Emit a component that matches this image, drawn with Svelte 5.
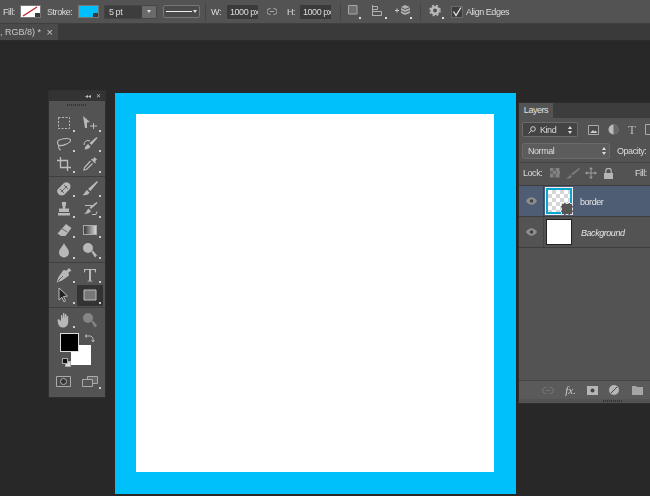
<script>
  // each icon: s = stroked path, f = filled path
  const icons = {
    marquee: { s: 'M2.500 2.500h11v11h-11z', dash: true },
    move: { f: 'M1 1l7 6-3 .5V13H3z', s: 'M8 11h7M11.500 8v6' },
    lasso: { s: 'M1.500 6c0-3 12-5 13-2s-10 7-12 5c-1-1-1-3-1-3M3 9c-1 2 0 5 2 5', width: 1.100 },
    brushSel: { f: 'M14.500 1l1 1-6 7-2-2zM6 8l2.500 2.500c-1 2-3 3-6 3 1-1 0-2 1-3z', s: 'M2 9a4 4 0 0 1 6-4' },
    crop: { s: 'M4.500 1v10.500H15M1 4.500h10.500V15', width: 1.300 },
    picker: { f: 'M12.500 1l2.500 2.500-2 2 1 1-1 1-4-4 1-1 1 1z', s: 'M8.500 5L2.500 11.500 2 14l2.500-.5L10.500 7.500', width: 1.200 },
    heal: { f: 'M2 8l6-6c2-1.500 5-.5 6 1.500s.5 4-1 5.500l-5 5c-2 1-5 .5-6-1.500s-1.500-3 0-4.500z', cut: 'M5 11l6-6M4 8l4 4M8 4l4 4' },
    brush: { f: 'M15 0l1 1-7.500 9L6 8zM5 9l2.500 2.500c-1 2.500-4 3-7 2.500 2-1 3-4 4.500-5z' },
    stamp: { f: 'M6 1h4v2.500l-1 4h4V11H3V7.500h4L6 3.500zM2 12h12v2.500H2z' },
    history: { f: 'M14.500 1l1 1-6.500 6-1.500-1.500zM6.500 7.500L9 10c-1 2-4 3-7 3 2-1 3-4 4.500-5.500z', s: 'M3 4.500h7M10 13.500h4l1-3', dash: false },
    eraser: { f: 'M10 2l5.500 4-6 8H5l-3.500-2.500z', cut: 'M5 6l6 4' },
    gradient: { grad: true },
    drop: { f: 'M8 1c1 3 5 6 5 9.500a5 5 0 0 1-10 0C3 7 7 4 8 1z' },
    dodge: { f: 'M6 1a5 5 0 1 1 0 10A5 5 0 0 1 6 1zM9.500 10l1.500-1.500 4 5-2 2z' },
    pen: { f: 'M13 1l2.500 2.500-3 2 .5 3-7 5-5.500 2 2-5.500 5-7 3 .5z', cut: 'M1.500 14.500L7 9' },
    type: { f: 'M2 2h12v3.500h-.8L12.500 3H9v10.500l1.500.5v.5h-5V14l1.500-.5V3H3.500L2.800 5.500H2z' },
    arrow: { f: 'M3 1l8.500 8-4 .5 2 4.500-1.500.8-2-4.500L3 13z', tone: '#222', s: 'M3 1l8.500 8-4 .5 2 4.500-1.500.8-2-4.500L3 13z' },
    rect: { f: 'M2 3h12v10H2z', s: 'M2 3h12v10H2z', tone: '#777' },
    hand: { f: 'M1.500 8l1-1 2.500 2V3h1.200l.8 4V1h1.300l.7 6V2h1.300l.7 5V4h1.200v6c0 3-2 5.500-5 5.500s-4-1-5-3.500z' },
    zoom: { f: 'M6 1a5 5 0 1 1 0 10A5 5 0 0 1 6 1zM9.500 10l1.500-1.500 4 5-2 2z', tone: '#858585' }
  };

  const groups = [
    [['marquee', 1], ['move', 1], ['lasso', 1], ['brushSel', 1], ['crop', 1], ['picker', 1]],
    [['heal', 1], ['brush', 1], ['stamp', 1], ['history', 1], ['eraser', 1], ['gradient', 1], ['drop', 1], ['dodge', 1]],
    [['pen', 1], ['type', 1], ['arrow', 1], ['rect', 1, true]],
    [['hand', 1], ['zoom', 0]]
  ];
</script>

{#snippet toolIcon(name)}
  {@const ic = icons[name]}
  <svg width="16" height="16" viewBox="0 0 16 16">
    {#if ic.grad}
      <defs>
        <linearGradient id="grad-tool">
          <stop offset="0" stop-color="#333" />
          <stop offset="1" stop-color="#ddd" />
        </linearGradient>
      </defs>
      <rect x="1.500" y="3.500" width="13" height="9" fill="url(#grad-tool)" stroke="#aaa" />
    {/if}
    {#if ic.f}<path d={ic.f} fill={ic.tone ?? '#b8b8b8'} />{/if}
    {#if ic.cut}<path d={ic.cut} fill="none" stroke="#666" />{/if}
    {#if ic.s}
      <path
        d={ic.s}
        fill="none"
        stroke="#bdbdbd"
        stroke-width={ic.width ?? 1}
        stroke-dasharray={ic.dash ? '2 1.5' : null}
      />
    {/if}
  </svg>
{/snippet}

{#snippet eye()}
  <span class="eye-cell">
    <svg width="11" height="8" viewBox="0 0 11 8"><path d="M0 4c3-5 8-5 11 0-3 5-8 5-11 0z" fill="#8e8e8e" /><circle cx="5.500" cy="4" r="1.800" fill="#444" /></svg>
  </span>
{/snippet}

<div class="app">
  <header class="options">
    <span class="lbl l-fill">Fill:</span>
    <span class="swatch fill">
      <svg width="19" height="11" viewBox="0 0 19 11"><path d="M2 10L16 1" stroke="#c8202c" stroke-width="1.400" /></svg>
      <i class="corner"></i>
    </span>
    <span class="lbl l-stroke">Stroke:</span>
    <span class="swatch stroke"><i class="corner"></i></span>
    <span class="pt-box"><span class="pt-val">5 pt</span><span class="pt-btn"><i class="down"></i></span></span>
    <span class="line-box"><b></b><i class="down"></i></span>
    <span class="vsep s1"></span>
    <span class="lbl l-w">W:</span>
    <span class="dim">1000 px</span>
    <svg class="link" width="10" height="7" viewBox="0 0 10 7"><path d="M3.500.5H3a3 3 0 0 0 0 6h.5M6.500.5H7a3 3 0 0 1 0 6h-.5M3 3.500h4" fill="none" stroke="#aaa" /></svg>
    <span class="lbl l-h">H:</span>
    <span class="dim">1000 px</span>
    <span class="vsep s2"></span>
    <svg class="i-shape" width="13" height="15" viewBox="0 0 13 15"><path d="M.5 1.500h8.500v8.500H.5z" fill="#6f6f6f" stroke="#a8a8a8" /><path d="M11 13h2v2h-2z" fill="#ddd" /></svg>
    <svg class="i-align" width="15" height="15" viewBox="0 0 15 15"><path d="M.5 1v11M.5 2.500h5v3h-5M.5 7.500h9v4h-9" fill="none" stroke="#b0b0b0" /><path d="M13 13h2v2h-2z" fill="#ddd" /></svg>
    <svg class="i-stack" width="17" height="15" viewBox="0 0 17 15"><path d="M0 6.500h4M2 4.500v4" stroke="#ccc" /><path d="M10 1l5 2-5 2-4-2zM10 6l5-2v2l-5 2-4-2V4zM10 9l5-2v2l-5 2-4-2V7z" fill="#b0b0b0" /><path d="M15 13h2v2h-2z" fill="#ddd" /></svg>
    <span class="vsep s3"></span>
    <svg class="i-gear" width="15" height="15" viewBox="0 0 15 15"><circle cx="6" cy="6.500" r="3.300" fill="none" stroke="#b8b8b8" stroke-width="2.600" /><circle cx="6" cy="6.500" r="5" fill="none" stroke="#b8b8b8" stroke-width="1.600" stroke-dasharray="2 2" /><path d="M13 13h2v2h-2z" fill="#ddd" /></svg>
    <span class="check">
      <svg width="10" height="10" viewBox="0 0 10 10"><path d="M1.500 4.500l2.500 4 5-8" fill="none" stroke="#ddd" stroke-width="1.400" /></svg>
    </span>
    <span class="lbl l-align">Align Edges</span>
  </header>

  <div class="tabs">
    <div class="tab"><span>, RGB/8) *</span><span class="close">×</span></div>
  </div>

  <main class="workspace">
    <div class="canvas"><div class="artboard"></div></div>

    <aside class="tools">
      <div class="tools-head"><span>◂◂</span><span>✕</span></div>
      <div class="grip"></div>
      {#each groups as group, g}
        {#if g > 0}<div class="tools-sep"></div>{/if}
        <div class="tool-grid">
          {#each group as [name, more, active]}
            <div class="tool" class:active class:more={more}>{@render toolIcon(name)}</div>
          {/each}
        </div>
      {/each}
      <div class="colors">
        <span class="bg-color"></span>
        <span class="fg-color"></span>
        <svg class="swap" width="11" height="10" viewBox="0 0 11 10"><path d="M1 2h6l2 2v4M1 2l2-1.500M1 2l2 1.500M9 8L7.500 6M9 8l1.500-2" fill="none" stroke="#b5b5b5" /></svg>
        <span class="mini"><i></i><b></b></span>
      </div>
      <div class="tool-grid bottom">
        <div class="tool">
          <svg width="16" height="12" viewBox="0 0 16 12"><path d="M.5.500h14v10H.5z" fill="#4a4a4a" stroke="#aaa" /><circle cx="7.500" cy="5.500" r="3" fill="#333" stroke="#b0b0b0" /></svg>
        </div>
        <div class="tool more">
          <svg width="16" height="12" viewBox="0 0 16 12"><path d="M5.500.500h10v7h-10z" fill="#666" stroke="#aaa" /><path d="M.5 3.500h10v7H.5z" fill="#555" stroke="#aaa" /></svg>
        </div>
      </div>
    </aside>

    <aside class="layers">
      <div class="panel-tabs"><span class="panel-tab">Layers</span></div>
      <div class="filter-row">
        <span class="select kind">
          <span class="kind-label">
            <svg width="8" height="8" viewBox="0 0 8 8"><circle cx="5" cy="3" r="2.300" fill="none" stroke="#ccc" /><path d="M3.500 4.500L.5 7.500" stroke="#ccc" /></svg>
            Kind
          </span>
          <i class="updown"></i>
        </span>
        <svg width="11" height="10" viewBox="0 0 11 10"><path d="M.5.500h10v9H.5z" fill="#4a4a4a" stroke="#aaa" /><path d="M2 8l3-3 1.500 1.500L8 5.500 9 8z" fill="#ccc" /></svg>
        <svg width="11" height="11" viewBox="0 0 11 11"><circle cx="5.500" cy="5.500" r="5" fill="#b8b8b8" /><path d="M5.500.5a5 5 0 0 1 0 10z" fill="#666" /></svg>
        <span class="t-icon">T</span>
        <svg width="10" height="11" viewBox="0 0 10 11"><path d="M.5.500h9v10h-9z" fill="none" stroke="#aaa" /></svg>
      </div>
      <div class="blend-row">
        <span class="select normal"><span>Normal</span><i class="updown"></i></span>
        <span class="lbl">Opacity:</span>
      </div>
      <div class="lock-row">
        <span class="lbl l-lock">Lock:</span>
        <svg class="k-check" width="10" height="10" viewBox="0 0 10 10"><path d="M0 0h10v10H0z" fill="#666" /><path d="M0 0h3v3H0zM6 0h3v3H6zM3 3h3v3H3zM7 3h3v3H7zM0 6h3v3H0zM6 6h3v3H6z" fill="#838383" /></svg>
        <svg class="k-brush" width="14" height="11" viewBox="0 0 14 11"><path d="M13 0l1 1-7 6-2-1zM4 7l2 1c-1 2-3 3-6 3 2-1 3-3 4-4z" fill="#7e7e7e" /></svg>
        <svg class="k-move" width="12" height="12" viewBox="0 0 13 13"><path d="M6.500 0l2 2.500h-1.500V6h3.500V4.500l2.500 2-2.500 2V7h-3.500v3.500h1.500l-2 2.500-2-2.500H6V7H2.500v1.500L0 6.500l2.500-2V6H6V2.500H4.500z" fill="#a0a0a0" /></svg>
        <svg class="k-lock" width="9" height="11" viewBox="0 0 9 11"><path d="M1.800 5V3a2.700 2.700 0 0 1 5.400 0v2" fill="none" stroke="#b5b5b5" stroke-width="1.200" /><path d="M0 5h9v6H0z" fill="#b5b5b5" /></svg>
        <span class="lbl l-fill2">Fill:</span>
      </div>
      <div class="layer selected">
        {@render eye()}
        <span class="thumb shape"><span class="badge"></span></span>
        <span class="layer-name">border</span>
      </div>
      <div class="layer">
        {@render eye()}
        <span class="thumb"></span>
        <span class="layer-name bg-name">Background</span>
      </div>
      <div class="layers-list"></div>
      <div class="panel-foot">
        <svg width="12" height="7" viewBox="0 0 12 7"><path d="M4.500.5H3.500a3 3 0 0 0 0 6h1M7.500.5h1a3 3 0 0 1 0 6h-1M4 3.500h4" fill="none" stroke="#787878" /></svg>
        <span class="fx">fx.</span>
        <svg width="11" height="9" viewBox="0 0 11 9"><path d="M0 0h11v9H0z" fill="#b5b5b5" /><circle cx="5.500" cy="4.500" r="2" fill="#444" /></svg>
        <svg width="10" height="10" viewBox="0 0 10 10"><circle cx="5" cy="5" r="5" fill="#b5b5b5" /><path d="M8 2L2 8" stroke="#444" /></svg>
        <svg class="folder" width="11" height="9" viewBox="0 0 11 9"><path d="M0 0h4l1 1h6v8H0z" fill="#a5a5a5" /></svg>
      </div>
      <div class="grip foot-grip"></div>
    </aside>
  </main>
</div>

<style>
  :global(body) {
    margin: 0;
    background: #282828;
  }

  .app {
    width: 650px;
    height: 496px;
    overflow: hidden;
    display: flex;
    flex-direction: column;
    font-family: "Liberation Sans", Arial, sans-serif;
    font-size: 9px;
    letter-spacing: -0.45px;
    color: #dcdcdc;
  }
  .app * { box-sizing: border-box; }

  .options {
    height: 24px;
    flex: none;
    display: flex;
    align-items: center;
    background: #535353;
    border-bottom: 1px solid #3f3f3f;
    white-space: nowrap;
    filter: blur(0.25px);
  }

  .lbl { color: #dcdcdc; flex: none; }
  .l-fill { margin-left: 3px; width: 17px; }
  .l-stroke { margin-left: 6px; width: 25px; }
  .l-w { margin-left: 5px; width: 16px; }
  .l-h { margin-left: 10px; width: 13px; }
  .l-align { margin-left: 3px; }

  .swatch {
    position: relative;
    width: 21px;
    height: 13px;
    display: block;
    flex: none;
    border: 1px solid #777;
  }
  .swatch.fill { background: #fff; }
  .swatch.fill svg { display: block; }
  .swatch.stroke { background: #00bfff; margin: 0 5px 0 6px; }

  .corner {
    position: absolute;
    right: 0;
    bottom: 0;
    width: 5px;
    height: 4px;
    background: #3a3a3a;
  }

  .pt-box {
    display: flex;
    flex: none;
    width: 53px;
    height: 14px;
    border: 1px solid #454545;
    margin-right: 6px;
  }
  .pt-val {
    flex: 1;
    background: #3d3d3d;
    padding-left: 4px;
    line-height: 12px;
  }
  .pt-btn {
    width: 14px;
    background: #6a6a6a;
    display: flex;
    align-items: center;
    justify-content: center;
  }

  .down {
    width: 0;
    height: 0;
    border-left: 2px solid transparent;
    border-right: 2px solid transparent;
    border-top: 3px solid #ddd;
  }

  .line-box {
    flex: none;
    width: 37px;
    height: 13px;
    border: 1px solid #777;
    border-radius: 2px;
    background: #4b4b4b;
    display: flex;
    align-items: center;
    gap: 1px;
    padding: 0 2px;
  }
  .line-box b {
    flex: 1;
    height: 1px;
    background: #eee;
  }

  .vsep {
    flex: none;
    width: 1px;
    height: 18px;
    background: #454545;
  }
  .s1 { margin-left: 5px; }
  .s2 { margin-left: 9px; }
  .s3 { margin-left: 8px; }

  .dim {
    flex: none;
    width: 31px;
    height: 14px;
    line-height: 14px;
    background: #3a3a3a;
    padding-left: 3px;
    overflow: hidden;
  }

  .link { margin-left: 9px; flex: none; }
  .i-shape { margin-left: 7px; flex: none; }
  .i-align { margin-left: 11px; flex: none; }
  .i-stack { margin-left: 8px; flex: none; }
  .i-gear { margin-left: 8px; flex: none; }

  .check {
    flex: none;
    width: 12px;
    height: 12px;
    background: #3d3d3d;
    border: 1px solid #6a6a6a;
    display: block;
    margin-left: 7px;
  }
  .check svg { display: block; }

  .tabs {
    height: 17px;
    flex: none;
    display: flex;
    background: #3a3a3a;
    border-bottom: 1px solid #2c2c2c;
  }
  .tab {
    width: 58px;
    background: #4a4a4a;
    display: flex;
    align-items: center;
    justify-content: space-between;
    padding-right: 5px;
    font-size: 9px;
    letter-spacing: 0;
    color: #c8c8c8;
    filter: blur(0.25px);
  }
  .close { font-size: 11px; }

  .workspace {
    position: relative;
    flex: 1;
    background: #282828;
  }

  .canvas {
    position: absolute;
    left: 115px;
    top: 52px;
    width: 401px;
    height: 401px;
    padding: 21px 22px 22px 21px;
    background: #00c0fb;
  }
  .artboard {
    height: 100%;
    background: #fff;
  }

  .tools {
    position: absolute;
    left: 49px;
    top: 50px;
    width: 56px;
    height: 306px;
    background: #535353;
    box-shadow: 0 0 0 1px #2f2f2f;
    filter: blur(0.25px);
  }
  .tools-head {
    height: 10px;
    background: #333;
    display: flex;
    justify-content: flex-end;
    gap: 6px;
    padding-right: 4px;
    font-size: 6px;
    line-height: 10px;
    color: #bbb;
  }
  .grip {
    height: 2px;
    width: 20px;
    margin: 3px auto 5px;
    background: repeating-linear-gradient(90deg, #333 0 1px, transparent 1px 2px);
  }

  .tool-grid {
    display: grid;
    grid-template-columns: 26px 26px;
    grid-auto-rows: 20.5px;
    padding: 2px 1px 1px 2px;
  }
  .tools-sep {
    height: 1px;
    background: #3f3f3f;
  }
  .tool {
    position: relative;
    display: flex;
    align-items: center;
    justify-content: center;
  }
  .tool.more::after {
    content: "";
    position: absolute;
    right: 2px;
    bottom: 2px;
    width: 2px;
    height: 2px;
    background: #ccc;
  }
  .tool.active {
    background: #333;
    border-radius: 1px;
  }

  .colors {
    position: relative;
    height: 36px;
    margin-top: 2px;
  }
  .fg-color, .bg-color {
    position: absolute;
  }
  .fg-color { left: 11px; top: 0; width: 19px; height: 19px; background: #000; border: 1px solid #ddd; }
  .bg-color { left: 22px; top: 12px; width: 20px; height: 20px; background: #fff; }
  .swap { position: absolute; left: 35px; top: 1px; }
  .mini { position: absolute; left: 13px; top: 25px; width: 9px; height: 9px; }
  .mini i, .mini b { position: absolute; width: 6px; height: 6px; border: 1px solid #aaa; }
  .mini i { right: 0; bottom: 0; background: #ddd; }
  .mini b { left: 0; top: 0; background: #111; }
  .bottom { margin-top: 2px; grid-auto-rows: 18px; }

  .layers {
    position: absolute;
    left: 519px;
    top: 62px;
    width: 131px;
    height: 300px;
    display: flex;
    flex-direction: column;
    background: #535353;
    box-shadow: 0 0 0 1px #2f2f2f;
    filter: blur(0.25px);
  }
  .panel-tabs {
    height: 15px;
    flex: none;
    background: #3d3d3d;
    display: flex;
  }
  .panel-tab {
    width: 34px;
    background: #535353;
    text-align: center;
    line-height: 15px;
    color: #e0e0e0;
  }
  .filter-row {
    height: 23px;
    flex: none;
    display: flex;
    align-items: center;
    gap: 9px;
    padding-left: 3px;
    overflow: hidden;
  }
  .filter-row svg { flex: none; }
  .select {
    height: 15px;
    border: 1px solid #6a6a6a;
    border-radius: 2px;
    background: #444;
    display: flex;
    align-items: center;
    justify-content: space-between;
    padding: 0 5px 0 5px;
    flex: none;
  }
  .kind { width: 56px; margin-right: 1px; }
  .kind-label { display: flex; align-items: center; gap: 4px; }
  .normal { width: 88px; height: 16px; background: #5c5c5c; padding-right: 3px; }
  .updown {
    width: 0;
    height: 0;
    border-left: 2px solid transparent;
    border-right: 2px solid transparent;
    border-bottom: 3px solid #ddd;
    position: relative;
    top: -2px;
  }
  .updown::after {
    content: "";
    position: absolute;
    left: -2px;
    top: 5px;
    border-left: 2px solid transparent;
    border-right: 2px solid transparent;
    border-top: 3px solid #ddd;
  }
  .t-icon {
    font-family: "Liberation Serif", serif;
    font-size: 13px;
    color: #b5b5b5;
  }
  .blend-row {
    height: 22px;
    flex: none;
    display: flex;
    align-items: center;
    gap: 7px;
    padding: 0 0 2px 3px;
    white-space: nowrap;
    border-bottom: 1px solid #444;
  }
  .lock-row {
    height: 23px;
    flex: none;
    display: flex;
    align-items: center;
    padding: 0 0 2px 4px;
    border-bottom: 1px solid #3d3d3d;
  }
  .l-lock { width: 27px; }
  .k-brush { margin-left: 6px; }
  .k-move { margin-left: 5px; }
  .k-lock { margin-left: 7px; }
  .l-fill2 { margin-left: 22px; }

  .layer {
    height: 31px;
    flex: none;
    display: flex;
    align-items: center;
    border-bottom: 1px solid #3d3d3d;
  }
  .layer.selected { background: #4e5d73; }
  .eye-cell {
    width: 25px;
    height: 100%;
    margin-right: 2px;
    display: flex;
    align-items: center;
    justify-content: center;
    border-right: 1px solid #444;
  }
  .thumb {
    position: relative;
    width: 26px;
    height: 26px;
    background: #fff;
    border: 1px solid #222;
    flex: none;
  }
  .thumb.shape {
    border: 2px solid #0aa5cf;
    outline: 1px solid #eee;
    background: repeating-conic-gradient(#d6d6d6 0 25%, #fff 0 50%) 0 0 / 8px 8px;
  }
  .badge {
    position: absolute;
    right: -3px;
    bottom: -3px;
    width: 12px;
    height: 12px;
    background: #555;
    border: 1px dashed #ddd;
  }
  .layer-name { margin-left: 8px; padding-top: 2px; color: #e4e4e4; }
  .bg-name { font-style: italic; margin-left: 9px; }

  .layers-list { flex: 1; }
  .panel-foot {
    height: 19px;
    flex: none;
    display: flex;
    align-items: center;
    justify-content: flex-end;
    gap: 11px;
    padding-right: 7px;
    background: #5a5a5a;
    border-top: 1px solid #444;
  }
  .folder { margin-left: 2px; }
  .fx {
    font-family: "Liberation Serif", serif;
    font-style: italic;
    font-size: 11px;
    letter-spacing: 0;
    color: #ccc;
  }
  .foot-grip { margin: 1px auto 1px 84px; flex: none; }
</style>
